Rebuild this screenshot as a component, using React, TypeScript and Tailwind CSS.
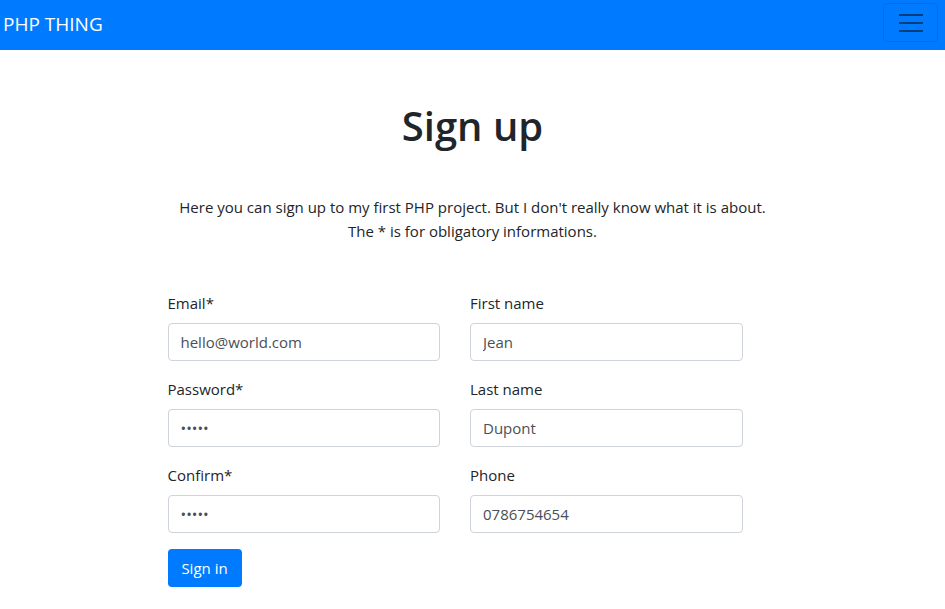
import { useState } from 'react';

const FONT = { fontFamily: '"Open Sans", "Noto Sans", Arial, sans-serif' };

interface FieldProps {
  label: string;
  value: string;
  type?: string;
}

function Field({ label, value, type = 'text' }: FieldProps) {
  const [val, setVal] = useState(value);
  return (
    <div className="mb-4">
      <label className="block mb-2 text-[15px] leading-6 text-[#212529]">{label}</label>
      <input
        type={type}
        value={val}
        onChange={(e) => setVal(e.target.value)}
        className="block w-full h-[38px] px-3 border border-[#ced4da] rounded text-[15px] text-[#495057] bg-white outline-none"
      />
    </div>
  );
}

export default function App() {
  return (
    <div className="min-h-screen bg-white text-[#212529]" style={FONT}>
      <nav className="h-[50px] bg-[#007bff] flex items-center justify-between pl-[3px] pr-[7px]">
        <a className="text-white text-[19px] leading-[30px] -mt-[3px]">PHP THING</a>
        <button
          type="button"
          className="w-[55px] h-[39px] -mt-[5px] border border-black/10 rounded flex flex-col items-center justify-center gap-[6px]"
        >
          <span className="block w-6 h-[2px] bg-black/50" />
          <span className="block w-6 h-[2px] bg-black/50" />
          <span className="block w-6 h-[2px] bg-black/50" />
        </button>
      </nav>

      <div className="w-[720px] mx-auto px-[15px]">
        <h1 className="text-center text-[40px] leading-[48px] font-semibold mt-[52px] mb-0">Sign up</h1>
        <p className="text-center text-[15px] leading-6 mt-[45px]">
          Here you can sign up to my first PHP project. But I don't really know what it is about.
          <br />
          The * is for obligatory informations.
        </p>

        <form className="w-[575px] ml-[40px] mt-[48px]" onSubmit={(e) => e.preventDefault()}>
          <div className="grid grid-cols-2 gap-x-[30px]">
            <div>
              <Field label="Email*" value="hello@world.com" type="email" />
              <Field label="Password*" value="12345" type="password" />
              <Field label="Confirm*" value="12345" type="password" />
            </div>
            <div>
              <Field label="First name" value="Jean" />
              <Field label="Last name" value="Dupont" />
              <Field label="Phone" value="0786754654" />
            </div>
          </div>
          <button
            type="submit"
            className="h-[38px] w-[74px] bg-[#007bff] text-white text-[15px] rounded"
          >
            Sign in
          </button>
        </form>
      </div>
    </div>
  );
}
